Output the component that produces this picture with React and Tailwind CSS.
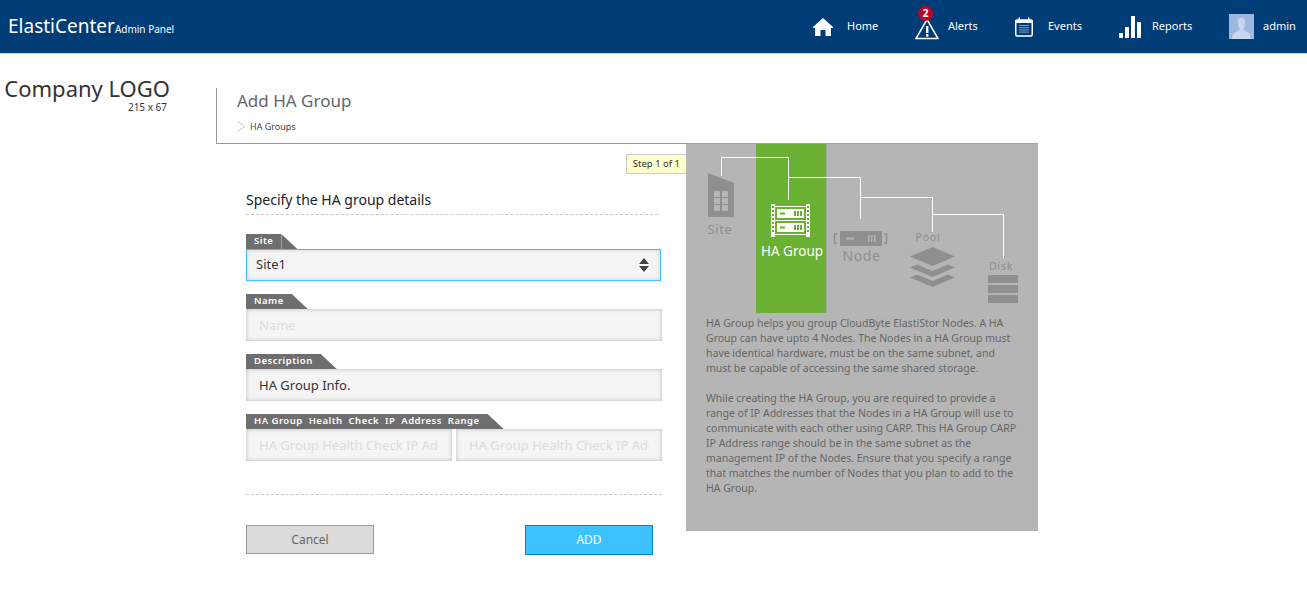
import React from 'react'

function HomeIcon() {
    return (
        <svg width="20" height="20" viewBox="0 0 20 20" fill="#fff">
            <path d="M10 1 L20 10 L20 11 L18 11 L18 19 L12.5 19 L12.5 13 L7.5 13 L7.5 19 L2 19 L2 11 L0 11 L0 10 Z" />
        </svg>
    )
}

function AlertIcon() {
    return (
        <div className="relative h-[24px] w-[24px]">
            <svg width="24" height="22" viewBox="0 0 24 22" className="mt-[3px]" fill="none">
                <path d="M12 1.5 L23 20.5 L1 20.5 Z" stroke="#fff" strokeWidth="1.5" />
                <rect x="11" y="8" width="2.4" height="7" fill="#fff" />
                <rect x="11" y="16.2" width="2.4" height="2.4" fill="#fff" />
            </svg>
            <span className="absolute left-[3px] top-[-9px] flex h-[15px] w-[15px] items-center justify-center rounded-full bg-[#b5062f] text-[10px] font-bold text-white">2</span>
        </div>
    )
}

function CalendarIcon() {
    return (
        <svg width="18" height="20" viewBox="0 0 18 20" fill="none">
            <rect x="0.75" y="3" width="16.5" height="16" rx="1.5" stroke="#fff" strokeWidth="1.5" />
            <rect x="0" y="3" width="18" height="3" fill="#fff" />
            <rect x="3.5" y="0.5" width="1.5" height="4" fill="#fff" />
            <rect x="13" y="0.5" width="1.5" height="4" fill="#fff" />
            <path d="M4 8.5h10M4 10.7h10M4 12.9h10M4 15.1h10" stroke="#cdd8e6" strokeWidth="1" />
            <path d="M5 8v8M7 8v8M9 8v8M11 8v8M13 8v8" stroke="#003c76" strokeWidth="0.7" />
        </svg>
    )
}

function ReportsIcon() {
    return (
        <svg width="22" height="22" viewBox="0 0 22 22" fill="#fff">
            <rect x="0" y="17" width="4" height="5" />
            <rect x="6" y="11" width="4" height="11" />
            <rect x="12" y="0" width="4" height="22" />
            <rect x="18" y="6" width="4" height="16" />
        </svg>
    )
}

function Avatar() {
    return (
        <svg width="25" height="25" viewBox="0 0 25 25">
            <rect width="25" height="25" fill="#9db7e0" />
            <path d="M12.5 4 C9.5 4 8.6 6.5 8.8 9 C9 11.5 10 13.5 10.6 14.4 C10.8 16 9 17 6 18.4 C4.5 19.2 3.6 20 3 25 L22 25 C21.4 20 20.5 19.2 19 18.4 C16 17 14.2 16 14.4 14.4 C15 13.5 16 11.5 16.2 9 C16.4 6.5 15.5 4 12.5 4 Z" fill="#c7d6ee" />
        </svg>
    )
}

function NavItem({ icon, label, gap, width }) {
    return (
        <div className={`flex items-center ${gap}`}>
            {icon}
            <span className={`${width} text-[11px] text-white`}>{label}</span>
        </div>
    )
}

function Tab({ label }) {
    return (
        <div className="flex h-[15px]">
            <div className="flex items-center bg-[#6e6e6e] pl-2 pr-2 text-[9.5px] font-semibold tracking-[0.5px] text-white whitespace-pre">{label}</div>
            <div className="h-[15px] w-4 bg-[#6e6e6e] [clip-path:polygon(0_0,100%_100%,0_100%)]"></div>
        </div>
    )
}

const inputClass = 'h-[32px] w-full bg-[#f5f5f5] px-[13px] text-[13px] text-[#333] shadow-[inset_0_0_4px_rgba(0,0,0,0.25)] outline-none placeholder:text-[#dcdcdc]'

function WizardDiagram() {
    return (
        <svg width="352" height="170" viewBox="0 0 352 170" className="block">
            <rect x="70" y="0" width="70" height="169" fill="#6ab033" />
            <rect x="140" y="0" width="1" height="169" fill="#a9a9a9" />

            <path d="M35.5 32 V13.5 H102.5 V56 M102.5 33.5 H174.5 V75 M174.5 53.5 H246.5 V88 M246.5 70.5 H317.5 V114" fill="none" stroke="#fff" strokeWidth="1" />

            {/* site */}
            <path d="M22 29 L48 39 L48 73 L22 73 Z" fill="#8f8f8f" />
            <g fill="#b5b5b5">
                <rect x="28" y="47" width="6" height="6" /><rect x="36" y="47" width="6" height="6" />
                <rect x="28" y="54" width="6" height="6" /><rect x="36" y="54" width="6" height="6" />
                <rect x="28" y="61" width="6" height="6" /><rect x="36" y="61" width="6" height="6" />
            </g>
            <text x="34" y="90" textAnchor="middle" fontSize="13" letterSpacing="0.6" fill="#8f8f8f">Site</text>

            {/* ha group */}
            <g fill="#fff">
                <path fillRule="evenodd" d="M85 60 H89 V93 H85 Z M86 62 V64 H88 V62 Z M86 66 V68 H88 V66 Z M86 70 V72 H88 V70 Z M86 74 V76 H88 V74 Z M86 78 V80 H88 V78 Z M86 82 V84 H88 V82 Z M86 86 V88 H88 V86 Z" />
                <path fillRule="evenodd" d="M120 60 H124 V93 H120 Z M121 62 V64 H123 V62 Z M121 66 V68 H123 V66 Z M121 70 V72 H123 V70 Z M121 74 V76 H123 V74 Z M121 78 V80 H123 V78 Z M121 82 V84 H123 V82 Z M121 86 V88 H123 V86 Z" />
                <rect x="89" y="62" width="31" height="1" />
                <rect x="89" y="76" width="31" height="1" />
                <rect x="89" y="90" width="31" height="1" />
                <rect x="91" y="65" width="27" height="9" />
                <rect x="91" y="79" width="27" height="9" />
            </g>
            <g fill="#6ab033">
                <rect x="94" y="68.5" width="5" height="2" /><rect x="108" y="67" width="2" height="5" /><rect x="111" y="67" width="2" height="5" /><rect x="114" y="67" width="2" height="5" />
                <rect x="94" y="82.5" width="5" height="2" /><rect x="108" y="81" width="2" height="5" /><rect x="111" y="81" width="2" height="5" /><rect x="114" y="81" width="2" height="5" />
            </g>
            <text x="106" y="112" textAnchor="middle" fontSize="13.5" fill="#fff">HA Group</text>

            {/* node */}
            <rect x="154" y="87" width="42" height="15" fill="#8f8f8f" />
            <g fill="#b5b5b5">
                <rect x="160" y="93.5" width="8" height="2" />
                <rect x="182" y="91" width="1.5" height="7" /><rect x="185" y="91" width="1.5" height="7" /><rect x="188" y="91" width="1.5" height="7" />
            </g>
            <path d="M151 90 H148.5 V99 H151 M198 90 H200.5 V99 H198" fill="none" stroke="#8f8f8f" strokeWidth="1.5" />
            <text x="175.5" y="116.5" textAnchor="middle" fontSize="14" letterSpacing="0.6" fill="#8f8f8f">Node</text>

            {/* pool */}
            <text x="242" y="97" textAnchor="middle" fontSize="10.5" letterSpacing="0.8" fill="#8f8f8f">Pool</text>
            <g fill="#8f8f8f">
                <path d="M224 112.5 L246.5 103 L269 112.5 L246.5 122 Z" />
                <path d="M224 123.5 L231 120.5 L246.5 127 L262 120.5 L269 123.5 L246.5 133 Z" />
                <path d="M224 133.5 L231 130.5 L246.5 137 L262 130.5 L269 133.5 L246.5 143 Z" />
            </g>

            {/* disk */}
            <text x="315" y="126" textAnchor="middle" fontSize="10.5" letterSpacing="0.8" fill="#8f8f8f">Disk</text>
            <g fill="#8f8f8f">
                <rect x="302" y="131" width="30" height="8" rx="1" />
                <rect x="302" y="141" width="30" height="8" rx="1" />
                <rect x="302" y="151" width="30" height="8" rx="1" />
            </g>
        </svg>
    )
}

export default function App() {
    return (
        <div className="h-[589px] bg-white font-['Noto_Sans',sans-serif]">
            <header className="flex h-[54px] items-center justify-between border-b border-[#c9d3dd] bg-[#003c76] pl-2 pr-[14px]">
                <div className="flex items-baseline text-white">
                    <span className="text-[19px]">ElastiCenter</span>
                    <span className="text-[10px]">Admin Panel</span>
                </div>
                <nav className="flex items-center gap-10">
                    <NavItem icon={<HomeIcon />} label="Home" gap="gap-[14px]" width="w-[28px]" />
                    <NavItem icon={<AlertIcon />} label="Alerts" gap="gap-[9px]" width="w-[27px]" />
                    <NavItem icon={<CalendarIcon />} label="Events" gap="gap-[15px]" width="w-[31px]" />
                    <NavItem icon={<ReportsIcon />} label="Reports" gap="gap-[11px]" width="w-[37px]" />
                    <NavItem icon={<Avatar />} label="admin" gap="gap-[9px]" width="w-[30px]" />
                </nav>
            </header>

            <div className="flex">
                <aside className="w-[216px] pr-[46px] pt-5 text-right text-[#333]">
                    <div className="text-[22px] leading-7">Company LOGO</div>
                    <div className="pr-[3px] text-[10px] leading-[10px]">215 x 67</div>
                </aside>

                <main className="w-[822px] pt-[34px]">
                    <div className="h-[56px] border-b border-l border-[#999] pl-[20px] pt-[1px]">
                        <h1 className="text-[17px] leading-6 text-[#666]">Add HA Group</h1>
                        <div className="mt-[7px] flex items-center gap-[4px] text-[9px] text-[#444]">
                            <svg width="9" height="11" viewBox="0 0 9 11" fill="none"><path d="M0.5 0.5 L8 5.5 L0.5 10.5" stroke="#c4c4c4" /></svg>
                            HA Groups
                        </div>
                    </div>

                    <div className="flex">
                        <div className="relative w-[470px] pl-[30px]">
                            <div className="absolute right-0 top-[10px] border border-r-0 border-[#cccccc] bg-[#ffffcc] px-[6px] py-[2px] text-[9.5px] leading-[14px] text-[#333]">Step 1 of 1</div>

                            <div className="w-[412px] border-b border-dashed border-[#c8c8c8] pb-[4px] pt-[45px] text-[14px] leading-[21px] text-[#222]">Specify the HA group details</div>

                            <div className="mt-[19px] w-[416px]">
                                <Tab label="Site" />
                                <div className="relative w-[415px]">
                                    <select defaultValue="Site1" className="h-[32px] w-full appearance-none border border-[#3cc3ff] bg-[#f5f5f5] pl-[9px] text-[13px] text-[#333] shadow-[inset_0_0_4px_rgba(0,0,0,0.15)] outline-none">
                                        <option>Site1</option>
                                    </select>
                                    <svg width="10" height="14" viewBox="0 0 10 14" fill="#444" className="absolute right-[12px] top-[9px]">
                                        <path d="M5 0 L10 6 L0 6 Z M0 8 L10 8 L5 14 Z" />
                                    </svg>
                                </div>

                                <div className="mt-[13px]"><Tab label="Name" /></div>
                                <input className={inputClass} placeholder="Name" />

                                <div className="mt-[13px]"><Tab label="Description" /></div>
                                <input className={inputClass} defaultValue="HA Group Info." />

                                <div className="mt-[13px]"><Tab label="HA Group  Health  Check  IP  Address  Range" /></div>
                                <div className="flex gap-1">
                                    <input className={inputClass} placeholder="HA Group Health Check IP Address Range" />
                                    <input className={inputClass} placeholder="HA Group Health Check IP Address Range" />
                                </div>
                            </div>

                            <div className="mt-[33px] w-[416px] border-b border-dashed border-[#c8c8c8]"></div>

                            <div className="mt-[30px] flex w-[407px] items-start justify-between">
                                <button className="h-[29px] w-[128px] border border-[#999] bg-[#dcdcdc] text-[12px] text-[#666]">Cancel</button>
                                <button className="h-[30px] w-[128px] border border-[#0d82c0] bg-[#3cc3ff] text-[12px] text-white">ADD</button>
                            </div>
                        </div>

                        <div className="h-[388px] w-[352px] -translate-y-px border-t border-[#a5a5a5] bg-[#b5b5b5]">
                            <WizardDiagram />
                            <div className="px-5 pt-[2px] text-[10.5px] leading-[15px] text-[#666]">
                                <p>HA Group helps you group CloudByte ElastiStor Nodes. A HA Group can have upto 4 Nodes. The Nodes in a HA Group must have identical hardware, must be on the same subnet, and must be capable of accessing the same shared storage.</p>
                                <p className="mt-[15px]">While creating the HA Group, you are required to provide a range of IP Addresses that the Nodes in a HA Group will use to communicate with each other using CARP. This HA Group CARP IP Address range should be in the same subnet as the management IP of the Nodes. Ensure that you specify a range that matches the number of Nodes that you plan to add to the HA Group.</p>
                            </div>
                        </div>
                    </div>
                </main>
            </div>
        </div>
    )
}
